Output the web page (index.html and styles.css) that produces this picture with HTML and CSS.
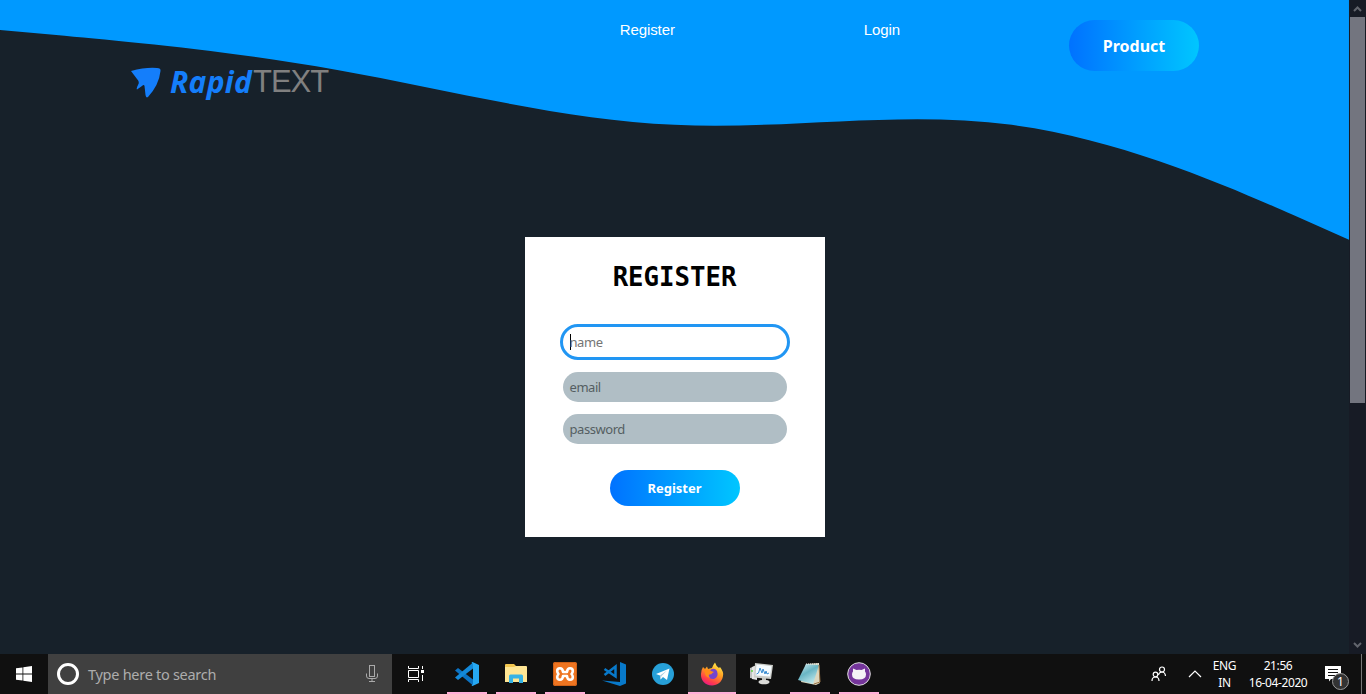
FILE: index.html
```html
<!DOCTYPE html>
<html lang="en">
<head>
<meta charset="utf-8">
<title>RapidTEXT</title>
<link rel="stylesheet" href="styles.css">
</head>
<body>
<div class="browser">
  <main class="page">
    <svg class="wave" viewBox="0 0 1440 320"><path fill="#0099ff" d="M0,32L60,37.3C120,43,240,53,360,74.7C480,96,600,128,720,133.3C840,139,960,117,1080,133.3C1200,149,1320,203,1380,229.3L1440,256L1440,0L0,0Z"/></svg>
    <header class="header">
      <div class="logo">
        <svg class="logo-mark" width="32" height="32" viewBox="0 0 32 32"><path fill="#147efb" d="M1 4Q16 0 27 1Q31 1 30.500 4Q29 18 18 30Q16 31.500 15.500 28L14.500 19Q14 17 12 19L7 22.500Q6 22 8 18Q10 15 7 12Z"/></svg>
        <span class="logo-rapid">Rapid</span><span class="logo-text">TEXT</span>
      </div>
      <nav class="nav">
        <a class="nav-link">Register</a>
        <a class="nav-link nav-login">Login</a>
        <a class="pill product">Product</a>
      </nav>
    </header>
    <form class="card">
      <h1 class="title">REGISTER</h1>
      <div class="field focused"><i class="caret"></i><span>name</span></div>
      <div class="field"><span>email</span></div>
      <div class="field"><span>password</span></div>
      <button class="pill submit" type="button">Register</button>
    </form>
  </main>
  <aside class="scrollbar">
    <svg width="17" height="17" viewBox="0 0 17 17"><path d="M5 11L8.500 7.500L12 11" fill="none" stroke="#62656d" stroke-width="2"/></svg>
    <div class="thumb"></div>
    <svg class="down" width="17" height="17" viewBox="0 0 17 17"><path d="M5 6L8.500 9.500L12 6" fill="none" stroke="#62656d" stroke-width="2"/></svg>
  </aside>
</div>
<footer class="taskbar">
  <div class="task start"><svg width="16" height="16" viewBox="0 0 16 16"><path fill="#fff" d="M0 2.300L6.500 1.400V7.600H0ZM7.300 1.300L16 0V7.600H7.300ZM0 8.400H6.500V14.600L0 13.700ZM7.300 8.400H16V16L7.300 14.800Z"/></svg></div>
  <div class="search">
    <i class="cortana"></i><span class="search-label">Type here to search</span>
    <svg width="12" height="18" viewBox="0 0 12 18" fill="none" stroke="#aaa"><rect x="3.500" y=".5" width="5" height="11"/><path d="M.5 8.500V11Q.5 13.500 3 13.500H9Q11.500 13.500 11.500 11V8.500M6 13.500V16.500M3 16.500H9"/></svg>
  </div>
  <div class="task task-view"><svg width="18" height="18" viewBox="0 0 18 18" fill="none" stroke="#fff"><path d="M1.500 1V3.500H11.500V1M1.500 17V14.500H11.500V17M1.500 5.500H11.500V12.500H1.500ZM15.500 1V4M15.500 10V16"/><path d="M14 5H17V8H14Z" fill="#fff" stroke="none"/></svg></div>
  <div class="task open"><svg width="24" height="24" viewBox="0 0 24 24"><path d="M0 8.500L3 6L18 17.500V23.500Z" fill="#0b73c4"/><path d="M0 15.500L3 18L18 6.500V.5Z" fill="#1389da"/><path d="M17.500 0L24 3V21L17.500 24L16.500 23.500L18 22V2L16.500 .5Z" fill="#26a8f2"/></svg></div>
  <div class="task open"><svg width="22" height="20" viewBox="0 0 22 20"><path d="M0 1Q0 0 1 0H9L11 2H21V18H0Z" fill="#f3c64f"/><path d="M0 3H9L11 2H21Q22 2 22 3V18H0Z" fill="#ffe694"/><path d="M4 19V12Q4 10.500 5.500 10.500H16.500Q18 10.500 18 12V19H14V14.500H8V19Z" fill="#36b3e6"/></svg></div>
  <div class="task open"><svg width="24" height="24" viewBox="0 0 24 24"><rect width="24" height="24" rx="2" fill="#ef7521"/><rect x=".5" y=".5" width="23" height="23" rx="2" fill="none" stroke="#ce6118"/><path d="M10 10H14Q14.300 6.200 17 6.200Q19.800 6.200 19.800 9Q19.800 10.500 18.500 12Q19.800 13.500 19.800 15Q19.800 17.800 17 17.800Q14.300 17.800 14 14H10Q9.700 17.800 7 17.800Q4.200 17.800 4.200 15Q4.200 13.500 5.500 12Q4.200 10.500 4.200 9Q4.200 6.200 7 6.200Q9.700 6.200 10 10Z" stroke="#fff" stroke-width="2.600" stroke-linejoin="round" fill="none"/></svg></div>
  <div class="task"><svg width="24" height="24" viewBox="0 0 24 24"><path d="M18 0L24 2.500V21.500L18 24L0 18.500L18 20Z" fill="#0879ca"/><path d="M2.500 7L13.500 14.500V4.500L2.500 13" fill="none" stroke="#0879ca" stroke-width="2.500"/></svg></div>
  <div class="task"><svg width="22" height="22" viewBox="0 0 22 22"><circle cx="11" cy="11" r="11" fill="#27a0d8"/><path d="M4 11L17.500 5.500L15 17L11 14L8.500 16.500L8 12.500Z" fill="#fff"/><path d="M8 12.500L15 7.500L9.500 13L8.500 16.500Z" fill="#a9cce0"/></svg></div>
  <div class="task active open"><svg width="24" height="24" viewBox="0 0 24 24"><defs><linearGradient id="fox" x1=".8" y1="0" x2=".3" y2="1"><stop offset="0" stop-color="#fff44f"/><stop offset=".45" stop-color="#ff9a20"/><stop offset=".8" stop-color="#ff3c4c"/><stop offset="1" stop-color="#e81887"/></linearGradient></defs><path d="M3 5L5 7L7 4.500L8 7L12 6Q13 3 15 0.500Q16 4 19 6L20 5Q24 10 23 14C22 20 17.500 23.500 12 23.500C5 23.500 .5 18 1 12Q1 8 3 5Z" fill="url(#fox)"/><path d="M9 9Q14 4.500 17 9Q19 15 14 17Q9 17.500 8 13L12 12L11 10Z" fill="#7545cf"/><path d="M3 6L6 8L9 7L11 9L14 10Q12 12 9 12Q8 14 10 16Q5 15 5 11Z" fill="#ff8b19"/></svg></div>
  <div class="task"><svg width="24" height="22" viewBox="0 0 24 22"><path d="M1 5L6 3V16L1 15Z" fill="#bfc2c1"/><path d="M3 4L8 2V17L3 16Z" fill="#e5e5e5"/><path d="M13 15H17V19H13Z" fill="#bfc1bd"/><ellipse cx="15" cy="19" rx="5.500" ry="2.300" fill="#dadad7"/><path d="M6 0L24 2L22 16L5 14.500Z" fill="#cbcdc9"/><path d="M7.500 1.500L22.500 3.200L21 13.500L6.500 12.500Z" fill="#f5fbff"/><path d="M7.500 11L9.500 10L11 5L13 10L14 6L16 11L17 8L18 11L20 10" stroke="#378bd0" fill="none"/><circle cx="3" cy="8" r="1" fill="#62d544"/></svg></div>
  <div class="task open"><svg width="24" height="22" viewBox="0 0 24 22"><defs><linearGradient id="note" x2=".6" y2="1"><stop stop-color="#d6eff2"/><stop offset=".5" stop-color="#69b5c4"/><stop offset="1" stop-color="#bde7ec"/></linearGradient></defs><path d="M8 1L21 0L22 20L18 22L3 19Z" fill="#dcd7bf"/><path d="M8 1L21 2L15 21L0 17Z" fill="url(#note)"/><path d="M21 2L22 19L16 21" stroke="#9a7446" fill="none"/><path d="M8 1L21 1" stroke="#eee" stroke-dasharray="1 1"/></svg></div>
  <div class="task open"><svg width="24" height="24" viewBox="0 0 24 24"><circle cx="12" cy="12" r="11.300" fill="#75359b" stroke="#ddd"/><path d="M5 12.500Q5 10.500 6 9.500V6.500L9.500 8Q12 7.500 14.500 8L18 6.500V9.500Q19 10.500 19 12.500Q19 17.500 12 17.500Q5 17.500 5 12.500Z" fill="#f5f3f6"/></svg></div>
  <div class="tray">
    <svg class="people" width="16" height="16" viewBox="0 0 16 16" fill="none" stroke="#fff" stroke-width="1.200"><circle cx="11" cy="3.500" r="2.500"/><path d="M7.500 9Q8 6 11 6Q14 6 14.500 10"/><circle cx="4.500" cy="8.500" r="2.300"/><path d="M1 15Q1 11 4.500 11Q8 11 8 15"/></svg>
    <svg class="chevron" width="14" height="8" viewBox="0 0 14 8"><path d="M1 7L7 1L13 7" fill="none" stroke="#fff" stroke-width="1.200"/></svg>
    <div class="stack language"><span>ENG</span><span>IN</span></div>
    <div class="stack clock"><span>21:56</span><span>16-04-2020</span></div>
    <div class="notice"><svg width="16" height="16" viewBox="0 0 16 16"><path fill="#fff" d="M0 0H16V13H6L4 15.500V13H0Z"/><path d="M3 3.500H13M3 6.500H13M3 9.500H10" stroke="#101010"/></svg><span class="badge">1</span></div>
    <i class="show-desktop"></i>
  </div>
</footer>
</body>
</html>
```
FILE: styles.css
```css
* { box-sizing: border-box; }
body { margin: 0; width: 1366px; height: 694px; overflow: hidden; display: flex; flex-direction: column; background: #17212a; font-family: "Noto Sans", sans-serif; }
svg { display: block; flex-shrink: 0; }
.browser { display: flex; height: 654px; }
.page { position: relative; width: 1349px; display: flex; flex-direction: column; align-items: center; }
.wave { position: absolute; top: 0; left: 0; width: 100%; z-index: 0; }
.header { z-index: 1; width: 100%; height: 237px; padding: 20px 150px 0 130px; display: flex; justify-content: space-between; align-items: flex-start; }
.logo { display: flex; align-items: center; height: 40px; margin-top: 42px; }
.logo-mark { margin-top: 2px; }
.logo-rapid { margin-left: 8px; width: 83px; color: #147efb; font: italic 700 30px/38px "Open Sans", sans-serif; letter-spacing: .3px; padding-bottom: 1px; }
.logo-text { color: #808080; font: 31px/40px "Liberation Sans", sans-serif; letter-spacing: -1px; }
.nav { display: flex; align-items: flex-start; }
.nav-link { color: #fff; font: 15px/20px "Liberation Sans", sans-serif; letter-spacing: -.1px; }
.nav-login { margin-left: 189px; }
.pill { display: flex; align-items: center; justify-content: center; width: 130px; border: 0; border-radius: 26px; color: #fff; background: linear-gradient(90deg, #0072ff, #00c6ff); font-family: "Noto Sans", sans-serif; font-weight: 700; }
.product { height: 51px; margin-left: 169px; font-size: 16px; }
.card { z-index: 1; width: 300px; height: 300px; padding: 22px 35px 0; background: #fff; display: flex; flex-direction: column; align-items: center; }
.title { margin: 0 0 29px; height: 36px; color: #000; font: 700 25.7px/36px "DejaVu Sans Mono", monospace; }
.field { display: flex; align-items: center; width: 224px; height: 30px; margin-bottom: 12px; padding-left: 7px; border-radius: 15px; background: #b0bec5; color: #555e62; font-size: 13px; letter-spacing: -.45px; }
.focused { width: 230px; height: 36px; border: 3px solid #2196f3; border-radius: 18px; background: #fff; color: #757575; }
.caret { width: 1px; height: 16px; margin-right: -1px; background: #000; }
.submit { height: 36px; margin-top: 14px; padding: 0; font-size: 13px; }
.scrollbar { width: 17px; background: #171b25; display: flex; flex-direction: column; }
.thumb { width: 15px; height: 386px; margin-left: 1px; background: #73757f; }
.down { margin-top: auto; }
.taskbar { height: 40px; display: flex; background: #101010; color: #fff; }
.task { width: 48px; margin-right: 1px; display: flex; align-items: center; justify-content: center; }
.start { margin-right: 0; }
.task-view { width: 48px; margin-right: 3px; }
.open { background: linear-gradient(#ffafd8, #ffafd8) center bottom / 40px 2px no-repeat; }
.active { background-color: #333; background-size: 48px 2px; }
.search { width: 344px; padding: 0 14px 0 9px; display: flex; align-items: center; background: #404040; color: #adadad; font-size: 14.5px; letter-spacing: -.28px; }
.cortana { width: 22px; height: 22px; border: 3px solid #fff; border-radius: 50%; }
.search-label { margin: 0 auto 0 9px; }
.tray { margin-left: auto; display: flex; align-items: center; font-size: 12px; }
.people { margin-right: 21px; }
.chevron { margin-right: 10px; }
.stack { display: flex; flex-direction: column; align-items: center; line-height: 17px; }
.language { width: 25px; letter-spacing: -.4px; }
.clock { width: 60px; margin: 0 17px 0 11px; letter-spacing: -.4px; }
.notice { position: relative; margin-right: 20px; }
.badge { position: absolute; left: 7px; top: 7px; width: 17px; height: 17px; border: 1px solid #999; border-radius: 50%; background: #333; font-size: 12px; line-height: 15px; text-align: center; }
.show-desktop { width: 1px; height: 40px; margin-right: 4px; background: #777; }
```
